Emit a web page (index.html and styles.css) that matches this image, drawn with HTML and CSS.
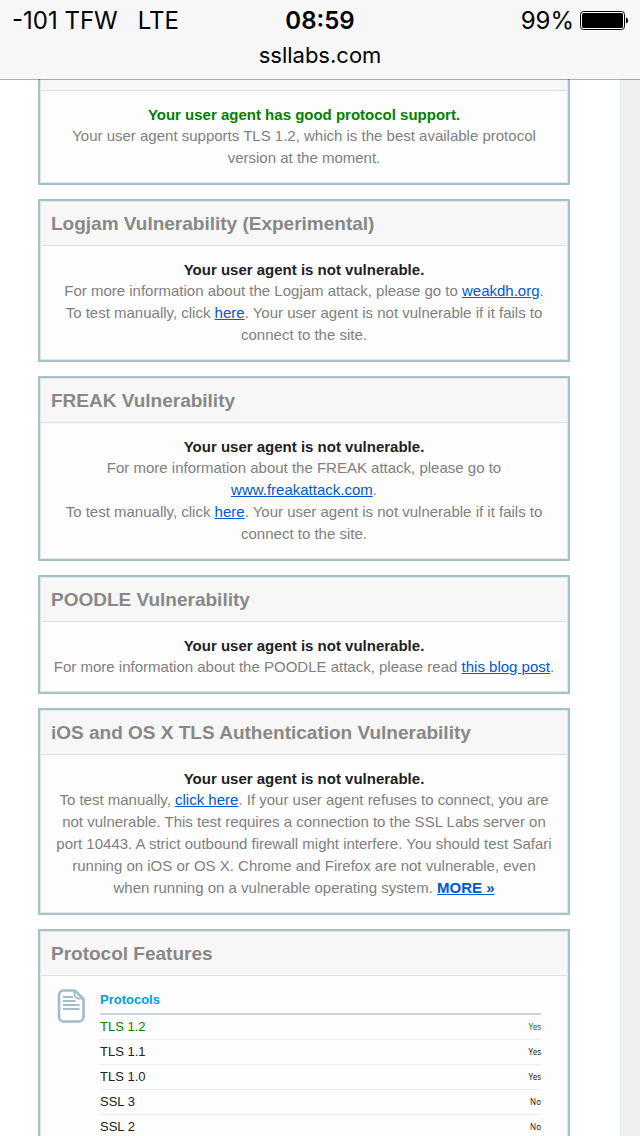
FILE: index.html
```
<!DOCTYPE html>
<html lang="en">
<head>
    <meta charset="UTF-8">
    <meta name="viewport" content="width=device-width, initial-scale=1.0">
    <title>SSL/TLS Capabilities of Your Browser</title>
    <link rel="stylesheet" href="styles.css">
</head>
<body>

<header class="topbar">
    <div class="status">
        <div class="carrier"><span>-101 TFW</span><span>LTE</span></div>
        <span class="clock">08:59</span>
        <div class="battery">
            <span>99%</span>
            <svg width="48" height="20" viewBox="0 0 48 20" aria-hidden="true">
                <rect x="0.5" y="0.5" width="44" height="18" rx="3" fill="#fff" stroke="#000"/>
                <rect x="2" y="2" width="41" height="15" rx="1.5" fill="#000"/>
                <path d="M46 6.500c1.400.3 2 1.500 2 3s-.6 2.700-2 3z" fill="#000"/>
            </svg>
        </div>
    </div>
    <div class="address">ssllabs.com</div>
</header>

<main class="page">
    <section class="box">
        <h2>Protocol Support</h2>
        <div class="box-body">
            <p class="result good">Your user agent has good protocol support.</p>
            <p>Your user agent supports TLS 1.2, which is the best available protocol version at the moment.</p>
        </div>
    </section>

    <section class="box">
        <h2>Logjam Vulnerability (Experimental)</h2>
        <div class="box-body">
            <p class="result">Your user agent is not vulnerable.</p>
            <p>For more information about the Logjam attack, please go to <a href="#">weakdh.org</a>.</p>
            <p>To test manually, click <a href="#">here</a>. Your user agent is not vulnerable if it fails to connect to the site.</p>
        </div>
    </section>

    <section class="box">
        <h2>FREAK Vulnerability</h2>
        <div class="box-body">
            <p class="result">Your user agent is not vulnerable.</p>
            <p>For more information about the FREAK attack, please go to <a href="#">www.freakattack.com</a>.</p>
            <p>To test manually, click <a href="#">here</a>. Your user agent is not vulnerable if it fails to connect to the site.</p>
        </div>
    </section>

    <section class="box">
        <h2>POODLE Vulnerability</h2>
        <div class="box-body">
            <p class="result">Your user agent is not vulnerable.</p>
            <p>For more information about the POODLE attack, please read <a href="#">this blog post</a>.</p>
        </div>
    </section>

    <section class="box">
        <h2>iOS and OS X TLS Authentication Vulnerability</h2>
        <div class="box-body">
            <p class="result">Your user agent is not vulnerable.</p>
            <p>To test manually, <a href="#">click here</a>. If your user agent refuses to connect, you are not vulnerable. This test requires a connection to the SSL Labs server on port 10443. A strict outbound firewall might interfere. You should test Safari running on iOS or OS X. Chrome and Firefox are not vulnerable, even when running on a vulnerable operating system. <a class="more" href="#">MORE &raquo;</a></p>
        </div>
    </section>

    <section class="box">
        <h2>Protocol Features</h2>
        <div class="features">
            <svg width="28" height="34" viewBox="0 0 28 34" fill="none" stroke="#a3bcc6" stroke-width="2" aria-hidden="true">
                <path d="M18 1.500H6.500a4.500 4.500 0 0 0-4.500 4.500v22a4.500 4.500 0 0 0 4.500 4.500h15.500a4.500 4.500 0 0 0 4.500-4.500V10z" stroke-width="2.600" stroke-linejoin="round"/>
                <path d="M17.500 2v3.500a4 4 0 0 0 4 4h4.500" stroke-width="1.800"/>
                <path d="M6 8h10M6 12h12.500M6 16h16.500M6 20h16.500"/>
            </svg>
            <table>
                <thead>
                    <tr><th colspan="2">Protocols</th></tr>
                </thead>
                <tbody>
                    <tr class="best"><td>TLS 1.2</td><td>Yes</td></tr>
                    <tr><td>TLS 1.1</td><td>Yes</td></tr>
                    <tr><td>TLS 1.0</td><td>Yes</td></tr>
                    <tr><td>SSL 3</td><td>No</td></tr>
                    <tr><td>SSL 2</td><td>No</td></tr>
                </tbody>
            </table>
        </div>
    </section>
</main>

</body>
</html>
```
FILE: styles.css
```
* {
    margin: 0;
    padding: 0;
    box-sizing: border-box;
}
body {
    height: 100vh;
    overflow: hidden;
    background-color: #efefef;
    font-family: "Liberation Sans", Arial, sans-serif;
    font-size: 15px;
    color: #808080;
}
.topbar {
    position: fixed;
    top: 0;
    left: 0;
    right: 0;
    height: 80px;
    padding-top: 4px;
    background-color: #f7f7f7;
    background-clip: padding-box;
    border-bottom: 1px solid rgba(0, 0, 0, 0.3);
    font-family: Inter, Roboto, sans-serif;
    line-height: 34px;
    color: #000;
}
.status {
    display: grid;
    grid-template-columns: 1fr auto 1fr;
    padding: 0 12px;
    font-size: 24px;
}
.carrier {
    display: flex;
    gap: 20px;
}
.clock {
    font-weight: 600;
}
.battery {
    display: flex;
    justify-content: flex-end;
    align-items: center;
    gap: 6px;
}
.address {
    text-align: center;
    font-size: 22px;
}
.page {
    min-height: 100vh;
    margin-right: 19px;
    padding: 44px 50px 0 38px;
    background-color: #fff;
    border-right: 1px solid #e0ecf0;
}
.box {
    margin-bottom: 14px;
    padding: 1px;
    border: 2px solid #a5c2c6;
    background-color: #dde8ea;
}
.box h2 {
    height: 44px;
    padding-left: 10px;
    background-color: #f7f7f7;
    border-bottom: 1px solid #dbe4e5;
    font-size: 19px;
    line-height: 43px;
    color: #888;
}
.box-body {
    padding: 13px 12px;
    background-color: #fdfdfd;
    text-align: center;
    line-height: 22px;
}
.box-body .result {
    font-weight: bold;
    line-height: 21px;
    color: #222;
}
.box-body .good {
    color: #008000;
}
a {
    color: #0059d0;
}
.more {
    font-weight: bold;
}
.features {
    display: flex;
    align-items: flex-start;
    gap: 15px;
    padding: 13px 26px 13px 16px;
    background-color: #fdfdfd;
}
.features table {
    flex: 1;
    border-collapse: collapse;
    font-size: 13px;
    color: #222;
}
th {
    height: 25px;
    padding-bottom: 4px;
    text-align: left;
    color: #00a0dc;
    border-bottom: 2px solid #c8d4d8;
}
td {
    height: 25px;
    border-bottom: 1px solid #eee;
}
td:last-child {
    text-align: right;
    font-family: "Noto Sans", sans-serif;
    font-size: 8px;
}
.best {
    color: #008000;
}
```
